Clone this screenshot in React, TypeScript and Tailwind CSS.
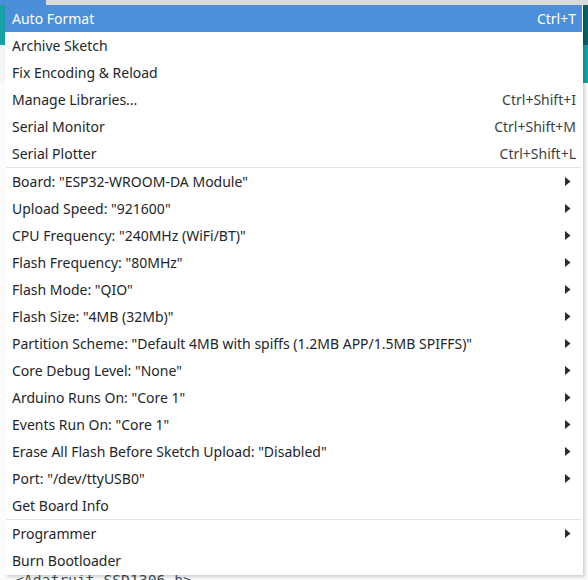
import * as React from 'react';

type Item =
  | { kind: 'item'; label: string; shortcut?: string; submenu?: boolean; active?: boolean }
  | { kind: 'sep' };

const items: Item[] = [
  { kind: 'item', label: 'Auto Format', shortcut: 'Ctrl+T', active: true },
  { kind: 'item', label: 'Archive Sketch' },
  { kind: 'item', label: 'Fix Encoding & Reload' },
  { kind: 'item', label: 'Manage Libraries...', shortcut: 'Ctrl+Shift+I' },
  { kind: 'item', label: 'Serial Monitor', shortcut: 'Ctrl+Shift+M' },
  { kind: 'item', label: 'Serial Plotter', shortcut: 'Ctrl+Shift+L' },
  { kind: 'sep' },
  { kind: 'item', label: 'Board: "ESP32-WROOM-DA Module"', submenu: true },
  { kind: 'item', label: 'Upload Speed: "921600"', submenu: true },
  { kind: 'item', label: 'CPU Frequency: "240MHz (WiFi/BT)"', submenu: true },
  { kind: 'item', label: 'Flash Frequency: "80MHz"', submenu: true },
  { kind: 'item', label: 'Flash Mode: "QIO"', submenu: true },
  { kind: 'item', label: 'Flash Size: "4MB (32Mb)"', submenu: true },
  { kind: 'item', label: 'Partition Scheme: "Default 4MB with spiffs (1.2MB APP/1.5MB SPIFFS)"', submenu: true },
  { kind: 'item', label: 'Core Debug Level: "None"', submenu: true },
  { kind: 'item', label: 'Arduino Runs On: "Core 1"', submenu: true },
  { kind: 'item', label: 'Events Run On: "Core 1"', submenu: true },
  { kind: 'item', label: 'Erase All Flash Before Sketch Upload: "Disabled"', submenu: true },
  { kind: 'item', label: 'Port: "/dev/ttyUSB0"', submenu: true },
  { kind: 'item', label: 'Get Board Info' },
  { kind: 'sep' },
  { kind: 'item', label: 'Programmer', submenu: true },
  { kind: 'item', label: 'Burn Bootloader' },
];

const Arrow: React.FC = () => (
  <svg width="6" height="9" viewBox="0 0 6 9" className="mr-[11px]">
    <path d="M0 0 L5.5 4.5 L0 9 Z" fill="#2a2e32" />
  </svg>
);

const MenuRow: React.FC<{ item: Extract<Item, { kind: 'item' }> }> = ({ item }) => (
  <div
    className={`flex items-center justify-between h-[27px] pl-[7px] ${
      item.active ? 'bg-[#4a8fd8] text-white' : 'text-[#232629]'
    }`}
  >
    <span className="whitespace-nowrap">{item.label}</span>
    {item.shortcut && (
      <span className={`pr-[6px] ${item.active ? 'text-white' : 'text-[#3b3f43]'}`}>{item.shortcut}</span>
    )}
    {item.submenu && <Arrow />}
  </div>
);

export default function App() {
  return (
    <div
      className="relative w-[588px] h-[580px] overflow-hidden bg-[#fcfcfc]"
      style={{ fontFamily: '"Noto Sans", "Open Sans", sans-serif' }}
    >
      {/* window behind the menu */}
      <div className="flex h-[5px]">
        <div className="w-[46px] bg-[#4a8fd8]" />
        <div className="flex-1 bg-[#dadada]" />
      </div>
      <div className="flex h-[40px]">
        <div className="w-[5px] bg-[#17a1a5]" />
        <div className="flex-1 bg-[#17a1a5]" />
        <div className="w-[6px] bg-[#006468]" />
      </div>
      <div className="flex h-[38px]">
        <div className="w-[5px] bg-[#f4f4f4]" />
        <div className="flex-1" />
        <div className="w-[6px] bg-[#17a1a5]" />
      </div>
      <div className="h-[492px]" />
      <div className="h-[5px] overflow-hidden pl-[15px]">
        <div
          className="-mt-[3px] text-[14.7px] leading-[16px] text-[#434f54] whitespace-nowrap"
          style={{ fontFamily: '"DejaVu Sans Mono", monospace' }}
        >
          &lt;Adafruit_SSD1306.h&gt;
        </div>
      </div>

      {/* Tools menu */}
      <div className="absolute left-[5px] top-[5px] w-[578px] bg-white text-[14px] leading-none shadow-[2px_2px_3px_rgba(0,0,0,0.18)]">
        <div className="flex flex-col pr-[1px] pb-[1px]">
          {items.map((it, i) =>
            it.kind === 'sep' ? (
              <div key={i} className="h-px bg-[#e3e3e3] mx-[1px]" />
            ) : (
              <MenuRow key={i} item={it} />
            )
          )}
        </div>
      </div>
    </div>
  );
}
